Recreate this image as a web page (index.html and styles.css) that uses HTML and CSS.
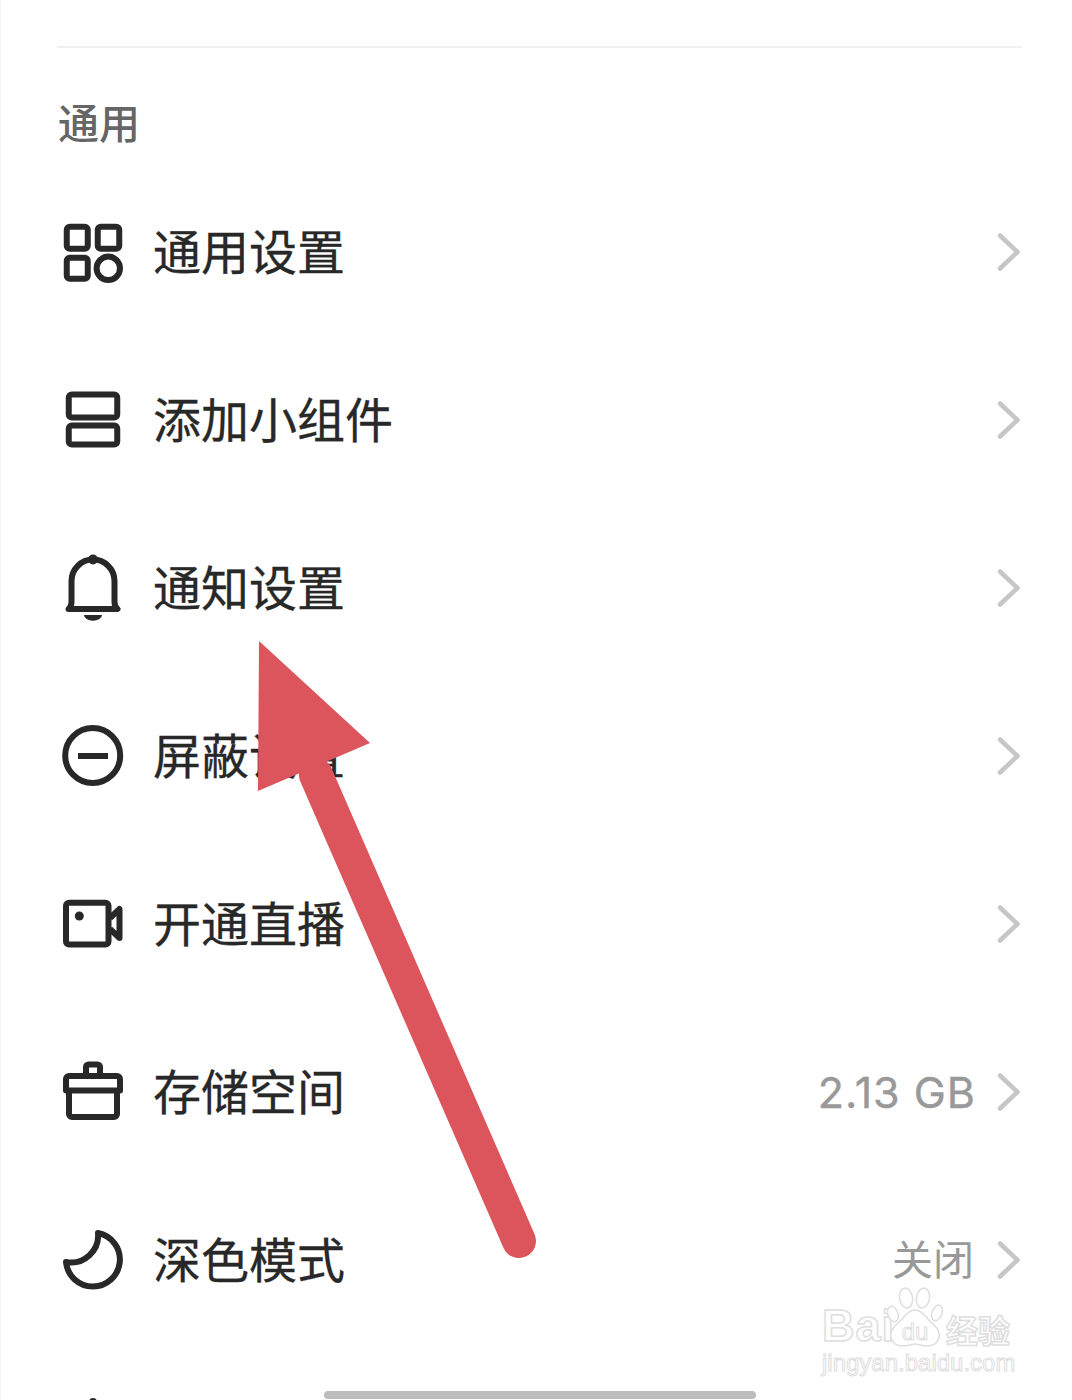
FILE: index.html
```html
<!DOCTYPE html>
<html lang="zh-CN">

<head>
  <meta charset="UTF-8">
  <meta name="viewport" content="width=device-width, initial-scale=1.0">
  <title>通用</title>
  <link rel="stylesheet" href="styles.css">
</head>

<body>
  <div class="page">
    <div class="divider"></div>
    <h2 class="section-title">通用</h2>

    <div class="row">
      <svg class="row-icon" viewBox="0 0 72 72">
        <rect x="9.75" y="10.75" width="21" height="22" rx="3" />
        <rect x="40.75" y="10.75" width="21.5" height="22" rx="3" />
        <rect x="9.75" y="41.75" width="21" height="21" rx="3" />
        <circle cx="51.3" cy="52.3" r="11.7" />
      </svg>
      <span class="row-label">通用设置</span>
      <svg class="chevron" viewBox="0 0 26 44"><path d="M4 5.5 21.5 22 4 38.5" /></svg>
    </div>

    <div class="row">
      <svg class="row-icon" viewBox="0 0 72 72">
        <rect x="11.75" y="10.5" width="48.5" height="23" rx="3" />
        <rect x="11.75" y="41.5" width="48.5" height="19" rx="3" />
      </svg>
      <span class="row-label">添加小组件</span>
      <svg class="chevron" viewBox="0 0 26 44"><path d="M4 5.5 21.5 22 4 38.5" /></svg>
    </div>

    <div class="row">
      <svg class="row-icon" viewBox="0 0 72 72">
        <path d="M11.5 57Q14.5 54 14.5 50V29A21.5 21.5 0 0 1 57.5 29V50Q57.5 54 60.5 57Z" />
        <circle class="solid" cx="36" cy="7.5" r="5" />
        <path class="solid" d="M27 63H45A9 5.7 0 0 1 27 63Z" />
      </svg>
      <span class="row-label">通知设置</span>
      <svg class="chevron" viewBox="0 0 26 44"><path d="M4 5.5 21.5 22 4 38.5" /></svg>
    </div>

    <div class="row">
      <svg class="row-icon" viewBox="0 0 72 72">
        <circle cx="35.7" cy="35.5" r="27.5" />
        <path d="M21 36H51" />
      </svg>
      <span class="row-label">屏蔽设置</span>
      <svg class="chevron" viewBox="0 0 26 44"><path d="M4 5.5 21.5 22 4 38.5" /></svg>
    </div>

    <div class="row">
      <svg class="row-icon" viewBox="0 0 72 72">
        <rect x="9" y="14.8" width="42.5" height="41.7" rx="3" />
        <circle class="solid" cx="22.3" cy="28" r="4.5" />
        <path d="M53 30 62.5 21V50L53 41" />
      </svg>
      <span class="row-label">开通直播</span>
      <svg class="chevron" viewBox="0 0 26 44"><path d="M4 5.5 21.5 22 4 38.5" /></svg>
    </div>

    <div class="row">
      <svg class="row-icon" viewBox="0 0 72 72">
        <path d="M9 34.5H63V23A3 3 0 0 0 60 20H12A3 3 0 0 0 9 23Z" />
        <path d="M12 34.5V58A3 3 0 0 0 15 61H57A3 3 0 0 0 60 58V34.5" />
        <path d="M29 20V11A2.5 2.5 0 0 1 31.5 8.5H40.5A2.5 2.5 0 0 1 43 11V20" />
      </svg>
      <span class="row-label">存储空间</span>
      <span class="row-value value-latin">2.13 GB</span>
      <svg class="chevron" viewBox="0 0 26 44"><path d="M4 5.5 21.5 22 4 38.5" /></svg>
    </div>

    <div class="row">
      <svg class="row-icon" viewBox="0 0 72 72">
        <path d="M41 9A27 27 0 1 1 9 38A27 27 0 0 0 41 9Z" />
      </svg>
      <span class="row-label">深色模式</span>
      <span class="row-value">关闭</span>
      <svg class="chevron" viewBox="0 0 26 44"><path d="M4 5.5 21.5 22 4 38.5" /></svg>
    </div>

    <!-- next row is cut off by the screen, only the top of its icon shows -->
    <div class="row-stub">
      <svg class="stub-icon" viewBox="0 0 72 5">
        <circle cx="36" cy="7" r="4" />
      </svg>
    </div>
  </div>

  <!-- watermark on top of the list -->
  <div class="watermark">
    <div class="wm-top">
      <span class="wm-bai">Bai</span>
      <svg class="wm-paw" viewBox="0 0 56 62">
        <ellipse cx="6" cy="28" rx="5" ry="8" transform="rotate(-20 6 28)" />
        <ellipse cx="19" cy="12" rx="6.5" ry="10" transform="rotate(-10 19 12)" />
        <ellipse cx="36" cy="12" rx="6.5" ry="10" transform="rotate(10 36 12)" />
        <ellipse cx="50" cy="27" rx="5" ry="8" transform="rotate(20 50 27)" />
        <path d="M28 24C20 24 17 33 8 40C0 48 4 60 16 60C21 60 25 58 28 58C31 58 35 60 40 60C52 60 56 48 48 40C39 33 36 24 28 24Z" />
        <text x="28" y="54" text-anchor="middle">du</text>
      </svg>
      <span class="wm-cn">经验</span>
    </div>
    <div class="wm-url">jingyan.baidu.com</div>
  </div>

  <!-- red arrow drawn over the screenshot -->
  <svg class="arrow" viewBox="0 0 1072 1400">
    <path class="arrow-shaft" d="M316 775 519 1241" />
    <polygon class="arrow-head" points="259,641 370,743 258,791" />
  </svg>

  <div class="home-bar"></div>
</body>

</html>
```

FILE: styles.css
```css
html,
body {
  margin: 0;
  padding: 0;
  height: 1400px;
  overflow: hidden;
  background-color: #fff;
}

body {
  position: relative;
  font-family: "Noto Sans CJK SC", "Noto Sans", sans-serif;
  color: #282828;
}

.page {
  height: 1400px;
  padding: 46px 50px 0 57px;
  box-sizing: border-box;
  border-left: 1px solid #f3f3f3;
  overflow: hidden;
}

.divider {
  height: 2px;
  margin-left: -1px;
  background-color: #f1f1f1;
}

.section-title {
  height: 40px;
  margin: 0;
  padding: 53px 0 27px;
  font-size: 41px;
  line-height: 40px;
  font-weight: 500;
  color: #666;
}

.row {
  display: flex;
  align-items: center;
  height: 168px;
  margin-left: -1px;
}

.row-icon {
  flex: none;
  width: 72px;
  height: 72px;
  margin-right: 24px;
  overflow: visible;
  fill: none;
  stroke: #282828;
  stroke-width: 6;
  stroke-linejoin: round;
}

.row-icon .solid {
  fill: #282828;
  stroke: none;
}

.row-label {
  flex: 1;
  padding-bottom: 6px;
  font-size: 48px;
  line-height: 60px;
  -webkit-text-stroke: 0.3px #282828;
}

.row-value {
  margin-right: 22px;
  padding-bottom: 6px;
  font-size: 41px;
  line-height: 60px;
  color: #999;
}

.value-latin {
  margin-right: 20px;
  padding-bottom: 0;
  font-family: Inter, "Noto Sans", sans-serif;
  font-size: 43px;
  letter-spacing: 1px;
  -webkit-text-stroke: 0.4px #999;
}

.chevron {
  flex: none;
  margin-left: auto;
  width: 26px;
  height: 44px;
  fill: none;
  stroke: #c6c6c6;
  stroke-width: 4.5;
  stroke-linecap: round;
  stroke-linejoin: round;
}

.row-value + .chevron {
  margin-left: 0;
}

.row-stub {
  height: 56px;
}

.stub-icon {
  display: block;
  width: 72px;
  height: 5px;
  margin: 51px 0 0 -1px;
  fill: #282828;
}

.watermark {
  position: absolute;
  left: 822px;
  top: 1286px;
  width: 194px;
  color: #fff;
  -webkit-text-stroke: 1.5px #dedede;
}

.wm-top {
  display: flex;
  align-items: flex-end;
  height: 62px;
}

.wm-bai {
  width: 65px;
  font-family: "Liberation Sans", sans-serif;
  font-size: 45px;
  line-height: 44px;
  font-weight: 700;
  letter-spacing: 1px;
}

.wm-paw {
  flex: none;
  width: 56px;
  height: 62px;
  fill: #fff;
  stroke: #dedede;
  stroke-width: 1.5;
}

.wm-paw text {
  font-family: "Liberation Sans", sans-serif;
  font-size: 24px;
  stroke-width: 1;
}

.wm-cn {
  margin-left: 3px;
  font-size: 32px;
  line-height: 38px;
  font-weight: 700;
  white-space: nowrap;
}

.wm-url {
  margin-top: 2px;
  font-family: "Liberation Sans", sans-serif;
  font-size: 24px;
  line-height: 26px;
  -webkit-text-stroke-width: 1px;
  white-space: nowrap;
}

.arrow {
  position: absolute;
  left: 0;
  top: 0;
  width: 1072px;
  height: 1400px;
}

.arrow-shaft {
  fill: none;
  stroke: #dc555c;
  stroke-width: 34;
  stroke-linecap: round;
}

.arrow-head {
  fill: #dc555c;
}

.home-bar {
  position: absolute;
  left: 324px;
  top: 1391px;
  width: 432px;
  height: 8px;
  border-radius: 4px;
  background-color: #bdbdbd;
}
```
